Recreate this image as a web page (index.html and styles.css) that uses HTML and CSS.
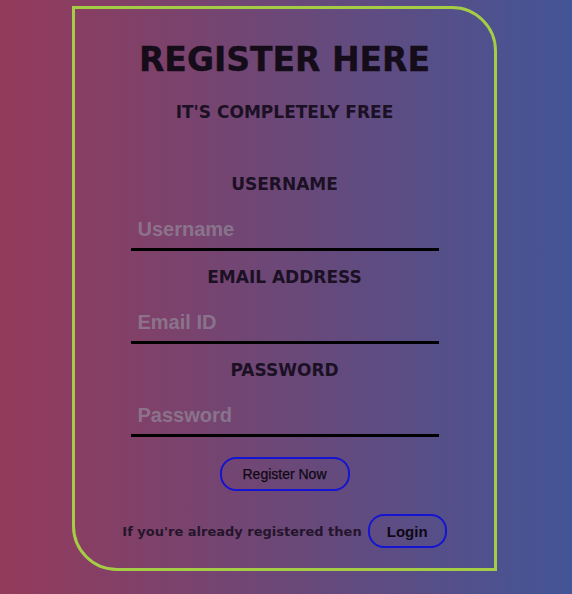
FILE: index.html
```html
<!DOCTYPE html>
<html lang="en">
<head>
<meta charset="utf-8">
<title>Register</title>
<link rel="stylesheet" href="styles.css">
</head>
<body>
<div class="card">
  <h1 class="title">REGISTER HERE</h1>
  <h3 class="subtitle">IT'S COMPLETELY FREE</h3>
  <form class="form">
    <label class="label first" for="u">USERNAME</label>
    <input class="field" id="u" type="text" placeholder="Username">
    <label class="label" for="e">EMAIL ADDRESS</label>
    <input class="field" id="e" type="email" placeholder="Email ID">
    <label class="label" for="p">PASSWORD</label>
    <input class="field" id="p" type="password" placeholder="Password">
    <button class="btn register" type="button">Register Now</button>
    <div class="login-row">
      <span class="login-text">If you're already registered then</span>
      <button class="btn login" type="button">Login</button>
    </div>
  </form>
</div>
</body>
</html>
```
FILE: styles.css
```css
html, body {
  margin: 0;
  padding: 0;
}
body {
  min-height: 594px;
  background: linear-gradient(to right, #943a5a 0%, #6b4878 50%, #435597 100%);
  font-family: "DejaVu Sans", Verdana, sans-serif;
  color: #1a0f1f;
  padding-top: 6px;
  box-sizing: border-box;
}
.card {
  box-sizing: border-box;
  width: 425px;
  height: 565px;
  margin: 0 0 0 72px;
  border: 3px solid #a4cc45;
  border-radius: 0 45px 0 45px;
  padding-top: 32px;
  display: flex;
  flex-direction: column;
  align-items: center;
}
.title {
  margin: 0;
  font-size: 33px;
  line-height: 37px;
  font-weight: bold;
  color: #150c19;
  -webkit-text-stroke: 0.4px #150c19;
}
.subtitle {
  margin: 24px 0 0;
  font-size: 17px;
  line-height: 20px;
  font-weight: bold;
  color: #1b1024;
}
.form {
  display: flex;
  flex-direction: column;
  align-items: center;
}
.label {
  font-size: 17px;
  line-height: 20px;
  font-weight: bold;
  color: #1b1024;
  margin-top: 16px;
}
.label.first {
  margin-top: 52px;
}
.field {
  box-sizing: border-box;
  width: 308px;
  height: 57px;
  padding: 24px 7px 8px;
  margin: 0;
  border: none;
  border-bottom: 3px solid #000;
  background: transparent;
  font-family: "Liberation Sans", Arial, sans-serif;
  font-size: 20px;
  line-height: 22px;
  font-weight: bold;
  color: #222;
  outline: none;
}
.field::placeholder {
  color: rgba(150, 148, 160, 0.62);
}
.btn {
  box-sizing: border-box;
  background: transparent;
  border: 2px solid #1414d2;
  border-radius: 16px;
  font-family: "Liberation Sans", Arial, sans-serif;
  color: #0e0812;
  padding: 0;
  margin: 0;
}
.register {
  width: 130px;
  height: 34px;
  margin-top: 20px;
  font-size: 14px;
  -webkit-text-stroke: 0.25px #0e0812;
}
.login-row {
  display: flex;
  align-items: center;
  gap: 6px;
  margin-top: 23px;
}
.login-text {
  font-size: 13px;
  font-weight: bold;
  color: #25152c;
}
.login {
  width: 79px;
  height: 34px;
  font-size: 15px;
  font-weight: bold;
}
```
